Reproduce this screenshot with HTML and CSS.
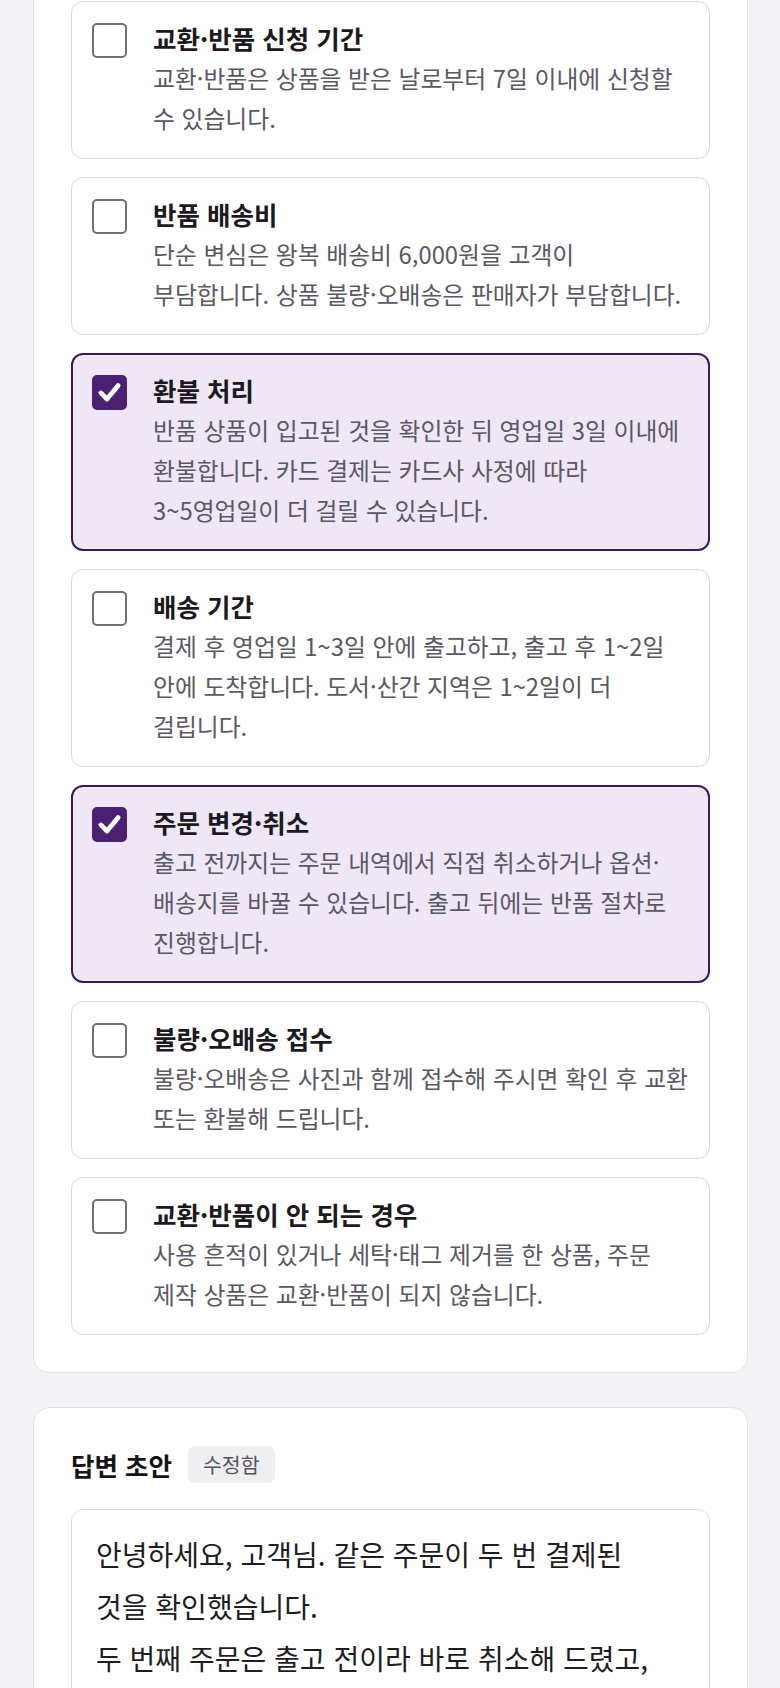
FILE: index.html
```html
<!DOCTYPE html>
<html lang="ko">
<head>
  <meta charset="UTF-8">
  <title>문의 답변 작성</title>
  <meta name="viewport" content="width=device-width, initial-scale=1">
  <link rel="stylesheet" href="styles.css">
</head>
<body>
  <main class="page">
    <section class="panel panel-policies">
      <ul class="policy-list">
        <li class="policy">
          <span class="box"></span>
          <div class="policy-body">
            <p class="policy-title">교환·반품 신청 기간</p>
            <p class="policy-desc">교환·반품은 상품을 받은 날로부터 7일 이내에 신청할 수 있습니다.</p>
          </div>
        </li>
        <li class="policy">
          <span class="box"></span>
          <div class="policy-body">
            <p class="policy-title">반품 배송비</p>
            <p class="policy-desc">단순 변심은 왕복 배송비 6,000원을 고객이 부담합니다. 상품 불량·오배송은 판매자가 부담합니다.</p>
          </div>
        </li>
        <li class="policy is-checked">
          <span class="box">
            <svg viewBox="0 0 36 36" width="100%" height="100%"><path d="M8 18.5 L15 25.5 L28 10" fill="none" stroke="#fff" stroke-width="5.5" stroke-linecap="round" stroke-linejoin="round"/></svg>
          </span>
          <div class="policy-body">
            <p class="policy-title">환불 처리</p>
            <p class="policy-desc">반품 상품이 입고된 것을 확인한 뒤 영업일 3일 이내에 환불합니다. 카드 결제는 카드사 사정에 따라 3~5영업일이 더 걸릴 수 있습니다.</p>
          </div>
        </li>
        <li class="policy">
          <span class="box"></span>
          <div class="policy-body">
            <p class="policy-title">배송 기간</p>
            <p class="policy-desc">결제 후 영업일 1~3일 안에 출고하고, 출고 후 1~2일 안에 도착합니다. 도서·산간 지역은 1~2일이 더 걸립니다.</p>
          </div>
        </li>
        <li class="policy is-checked">
          <span class="box">
            <svg viewBox="0 0 36 36" width="100%" height="100%"><path d="M8 18.5 L15 25.5 L28 10" fill="none" stroke="#fff" stroke-width="5.5" stroke-linecap="round" stroke-linejoin="round"/></svg>
          </span>
          <div class="policy-body">
            <p class="policy-title">주문 변경·취소</p>
            <p class="policy-desc">출고 전까지는 주문 내역에서 직접 취소하거나 옵션·<wbr>배송지를 바꿀 수 있습니다. 출고 뒤에는 반품 절차로 진행합니다.</p>
          </div>
        </li>
        <li class="policy">
          <span class="box"></span>
          <div class="policy-body">
            <p class="policy-title">불량·오배송 접수</p>
            <p class="policy-desc">불량·오배송은 사진과 함께 접수해 주시면 확인 후 교환 또는 환불해 드립니다.</p>
          </div>
        </li>
        <li class="policy">
          <span class="box"></span>
          <div class="policy-body">
            <p class="policy-title">교환·반품이 안 되는 경우</p>
            <p class="policy-desc">사용 흔적이 있거나 세탁·태그 제거를 한 상품, 주문 제작 상품은 교환·반품이 되지 않습니다.</p>
          </div>
        </li>
      </ul>
    </section>

    <section class="panel panel-draft">
      <div class="draft-head">
        <h3 class="draft-title">답변 초안</h3>
        <span class="tag">수정함</span>
      </div>
      <div class="draft-box">
        <p>안녕하세요, 고객님. 같은 주문이 두 번 결제된 것을 확인했습니다.</p>
        <p>두 번째 주문은 출고 전이라 바로 취소해 드렸고,</p>
      </div>
    </section>
  </main>
</body>
</html>
```

FILE: styles.css
```css
body {
  margin: 0;
  background-color: #f3f2f5;
  font-family: "Noto Sans CJK KR", "Noto Sans", sans-serif;
}
.page { padding: 0 32px 40px 33px; }

.panel {
  background-color: white;
  border: 1px solid #e2e1e6;
  border-radius: 16px;
  padding: 37px;
}
.panel-policies { margin-top: -37px; }
.panel + .panel { margin-top: 34px; }

.policy-list {
  list-style: none;
  margin: 0;
  padding: 0;
  display: flex;
  flex-direction: column;
  gap: 18px;
}
.policy {
  display: flex;
  gap: 26px;
  padding: 20px 16px 20px 20px;
  border: 1px solid #d9d8dd;
  border-radius: 12px;
  background-color: white;
}
.policy.is-checked {
  padding: 19px 15px 19px 19px;
  border: 2px solid #3b1a5c;
  background-color: #efe7f6;
}

.box {
  flex: none;
  box-sizing: border-box;
  width: 35px;
  height: 35px;
  margin-top: 1px;
  border: 2px solid #6f6e73;
  border-radius: 5px;
  background-color: white;
}
.box svg { display: block; }
.is-checked .box { background-color: #4a2073; border-color: #4a2073; }

.policy-body { min-width: 0; }
.policy-title {
  margin: 0;
  font-size: 25.5px;
  line-height: 32px;
  font-weight: 700;
  color: #1c1a20;
}
.policy-desc {
  margin: 4px 0 0;
  font-size: 23.8px;
  line-height: 40px;
  color: #5a5863;
  word-break: keep-all;
}

.draft-head {
  display: flex;
  align-items: center;
  gap: 16px;
  height: 38px;
}
.draft-title { margin: 0; font-size: 25.5px; font-weight: 700; color: #151318; }
.tag {
  font-size: 20.5px;
  line-height: 25px;
  padding: 6px 15px;
  border-radius: 7px;
  background-color: #efeef2;
  color: #56555d;
}
.draft-box {
  margin-top: 26px;
  border: 1px solid #dddce1;
  border-radius: 12px;
  padding: 18px 30px 40px 24px;
  font-size: 28px;
  line-height: 52px;
  color: #1e1d22;
  word-break: keep-all;
}
.draft-box p { margin: 0; }
```
